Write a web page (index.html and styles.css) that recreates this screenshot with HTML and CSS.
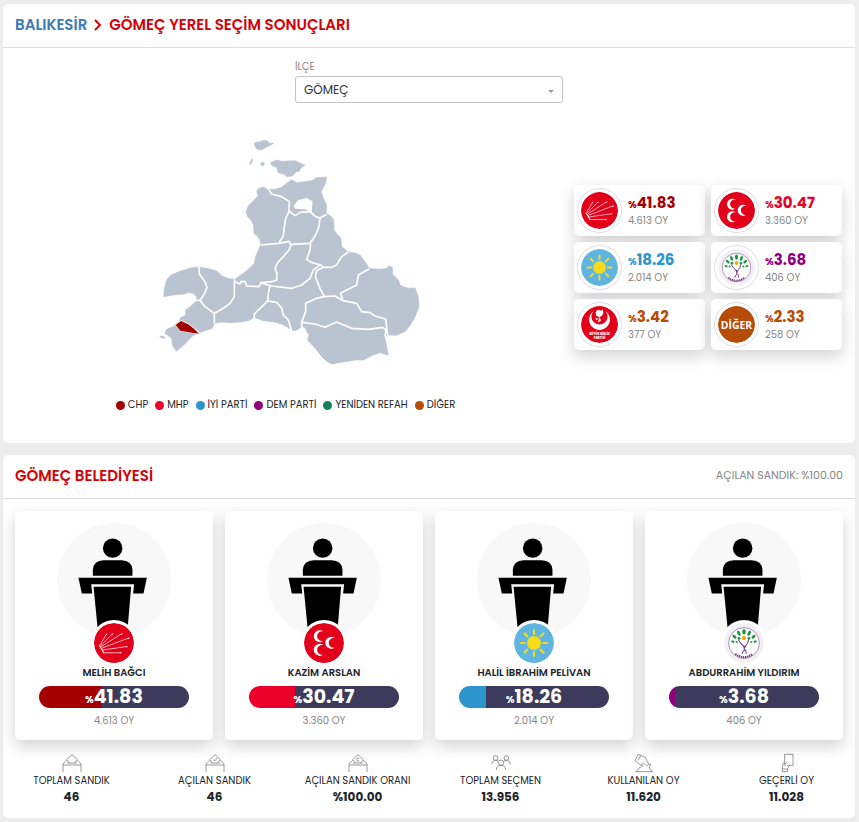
FILE: index.html
```html
<!DOCTYPE html>
<html lang="tr">
<head>
   <meta charset="UTF-8">
   <meta name="viewport" content="width=device-width, initial-scale=1.0">
   <title>Gömeç Yerel Seçim Sonuçları</title>
   <link rel="stylesheet" href="styles.css">
</head>
<body>
   <!-- Shared logos and figures -->
   <svg class="sprite" aria-hidden="true">
      <symbol id="logo-chp" viewBox="0 0 114 114">
         <circle cx="57" cy="57" r="57" fill="#e2001a"/>
         <g stroke="#fff" stroke-width="2" fill="#fff">
            <path d="M17 63L35 33M18 66L52 31M20 68L78 31M22 72L98 43M24 77L94 67M28 85H76"/>
            <path d="M33 34l3-5 1 5zM50 33l6-4-3 5zM76 32l6-3-3 5zM95 43l8-1-6 4zM91 67l7-1-6 4zM74 83l6 2-6 2z" stroke="none"/>
            <path d="M15 64l13 22-4-9-6-9z"/>
         </g>
      </symbol>
      <symbol id="logo-mhp" viewBox="0 0 114 114">
         <circle cx="57" cy="57" r="57" fill="#e2001a"/>
         <g fill="#fff">
            <path d="M55 24A17 17 0 1 0 55 51A14 14 0 1 1 55 24z"/>
            <path d="M55 63A17 17 0 1 0 55 90A14 14 0 1 1 55 63z"/>
            <path d="M88 43A17 17 0 1 0 88 70A14 14 0 1 1 88 43z"/>
         </g>
      </symbol>
      <symbol id="logo-iyi" viewBox="0 0 114 114">
         <circle cx="57" cy="57" r="57" fill="#5fb5e0"/>
         <circle cx="57" cy="57" r="20" fill="#f4dc1c"/>
         <path d="M57 31V20M57 83v11M31 57H20M83 57h11M38 38l-8-8M76 38l8-8M38 76l-8 8M76 76l8 8" stroke="#f4dc1c" stroke-width="6" stroke-linecap="round"/>
      </symbol>
      <symbol id="logo-dem" viewBox="0 0 114 114">
         <circle cx="57" cy="57" r="57" fill="#f1f1f1"/>
         <circle cx="57" cy="57" r="44" fill="#fff" stroke="#9560a5" stroke-width="2"/>
         <g fill="#16963e">
            <ellipse cx="57" cy="25" rx="5" ry="8"/>
            <ellipse cx="42" cy="29" rx="4" ry="8" transform="rotate(-25 42 29)"/>
            <ellipse cx="72" cy="29" rx="4" ry="8" transform="rotate(25 72 29)"/>
            <ellipse cx="30" cy="39" rx="4" ry="7" transform="rotate(-48 30 39)"/>
            <ellipse cx="84" cy="39" rx="4" ry="7" transform="rotate(48 84 39)"/>
            <ellipse cx="25" cy="53" rx="3" ry="5" transform="rotate(-70 25 53)"/>
            <ellipse cx="89" cy="53" rx="3" ry="5" transform="rotate(70 89 53)"/>
            <circle cx="43" cy="44" r="4"/>
            <circle cx="71" cy="44" r="4"/>
            <circle cx="36" cy="54" r="3"/>
            <circle cx="78" cy="54" r="3"/>
         </g>
         <circle cx="57" cy="43" r="6" fill="#f7a600"/>
         <path d="M41 48q7 13 14 17l3 7 5-9q6-5 7-16M57 64l1 14q-7 4-6 10M60 76q5 5 3 12" fill="none" stroke="#74378a" stroke-width="3"/>
         <path d="M32 88q25 19 50 0" fill="none" stroke="#74378a" stroke-width="6" stroke-dasharray="4 2"/>
      </symbol>
      <symbol id="speaker" viewBox="170 68 340 340">
         <circle cx="340" cy="238" r="170" fill="#f8f8f8"/>
         <circle cx="336" cy="143" r="29"/>
         <path d="M277 225V207q2-27 32-28h54q30 1 32 28v18z"/>
         <path d="M234 231H438L428 278H397L400 251H272L275 278H244z"/>
         <path d="M279 258H391L380 390H292z"/>
      </symbol>
      <symbol id="ballot-box" viewBox="0 0 60 56">
         <path d="M3 55V34H57V55M3 34V30L14 20M57 34V30L46 20M16 28H44M22 28L14 18 30 3 46 18 38 28"/>
      </symbol>
   </svg>

   <section class="panel">
      <header class="panel-header">
         <h1 class="title">
            <a href="#">BALIKESİR</a>
            <svg class="chevron" viewBox="0 0 8 12" aria-hidden="true"><path d="M1 1l5 5-5 5"/></svg>
            <span>GÖMEÇ YEREL SEÇİM SONUÇLARI</span>
         </h1>
      </header>

      <div class="district">
         <label for="district">İLÇE</label>
         <div class="select-wrap">
            <select id="district">
               <option>GÖMEÇ</option>
            </select>
         </div>
      </div>

      <div class="results">
         <div class="map-column">
            <svg class="map" viewBox="-27 0 840 720" role="img" aria-label="Balıkesir ilçe haritası">
               <g class="land">
                  <path d="M26 500L28 475 36 448 48 435 75 424 110 413 132 411 165 417 185 423 200 437 222 446 240 448 262 432 280 418 298 400 302 380 312 355 318 345 314 328 304 316 297 310 296 285 288 270 278 260 273 245 280 228 295 212 310 197 305 184 312 175 326 171 337 178 360 178 380 172 395 160 410 149 425 158 470 152 485 143 515 141 512 160 498 185 505 205 515 225 514 250 528 259 536 270 537 300 548 315 558 325 560 350 580 366 600 369 615 375 630 395 643 415 670 418 693 416 702 408 712 412 713 433 730 450 736 466 760 475 780 474 790 500 792 530 780 560 768 582 752 603 725 616 702 615 688 620 693 640 700 675 675 668 655 675 625 690 600 690 570 695 530 702 515 694 500 680 485 660 458 630 462 615 450 594 442 588 430 598 415 602 395 590 380 582 355 575 325 572 298 562 280 572 255 576 225 578 200 576 178 580 172 595 150 602 132 608 112 618 92 640 78 652 64 664 52 645 50 625 30 610 35 598 55 590 62 583 75 573 76 563 92 555 92 540 105 530 125 512 125 500 115 490 100 487 90 492 60 494z"/>
                  <path d="M297 42L302 37 318 35 324 31 338 33 341 39 356 40 340 49 318 60 305 57z"/>
                  <path d="M347 98L365 90 380 94 420 92 450 106 437 114 433 124 424 125 412 138 395 140 388 133 370 128 365 112 350 106z"/>
                  <path d="M284 101l5-12 4-2-2 10-4 6zM317 100l9-3 2 6-6 6zM14 618l14 2 2 5-10-1z"/>
               </g>
               <g class="borders">
                  <path d="M132 411L133 432 150 455 156 472 148 492 136 510 124 512"/>
                  <path d="M136 512L150 530 178 550V580M178 550L205 535 225 520 238 500V448"/>
                  <path d="M240 455L255 462 258 455H270L275 468 312 470 318 458 350 455 365 450 366 430 360 415 368 398 385 380 402 360 408 345 402 334 372 340 318 345"/>
                  <path d="M372 338L385 318 388 290 392 265 402 245 403 215 380 200 350 192 340 178"/>
                  <path d="M402 243L420 257 435 247 465 245 482 260 495 264 515 253"/>
                  <path d="M495 264L492 290 482 315 465 340 408 343"/>
                  <path d="M467 340L465 360 455 388 470 398 498 405 505 412 530 412 545 405 560 380 580 366"/>
                  <path d="M498 403L475 420 465 445 440 465 410 475 350 468 315 458"/>
                  <path d="M505 412L485 422 481 440 495 475 508 500"/>
                  <path d="M345 468L340 490 338 513 310 540 298 552V564M338 513L365 517 380 535 385 555 400 570 410 602"/>
                  <path d="M643 416L610 435 605 465 575 480 557 490 563 510"/>
                  <path d="M440 590V577L452 545V520L485 505 507 500 540 498 565 512 605 520 620 545 645 548 660 558 692 567 698 617"/>
                  <path d="M440 577L480 582 510 592 545 576 590 595 640 598 683 592 693 600 690 620"/>
                  <path d="M78 573L100 583 132 608"/>
               </g>
               <path class="lake" d="M415 228L430 210 455 204 473 214 470 246 450 238 420 236z"/>
               <path class="selected" d="M62 585L78 573 100 583 118 597 132 611 100 607 76 602z"/>
            </svg>
            <ul class="legend">
               <li><span class="dot chp"></span>CHP</li>
               <li><span class="dot mhp"></span>MHP</li>
               <li><span class="dot iyi"></span>İYİ PARTİ</li>
               <li><span class="dot dem"></span>DEM PARTİ</li>
               <li><span class="dot yrp"></span>YENİDEN REFAH</li>
               <li><span class="dot other"></span>DİĞER</li>
            </ul>
         </div>

         <div class="party-grid">
            <div class="party-card">
               <svg class="party-logo"><use href="#logo-chp"/></svg>
               <div class="party-text">
                  <p class="rate text-chp"><small>%</small>41.83</p>
                  <p class="votes">4.613 OY</p>
               </div>
            </div>
            <div class="party-card">
               <svg class="party-logo"><use href="#logo-mhp"/></svg>
               <div class="party-text">
                  <p class="rate text-mhp"><small>%</small>30.47</p>
                  <p class="votes">3.360 OY</p>
               </div>
            </div>
            <div class="party-card">
               <svg class="party-logo"><use href="#logo-iyi"/></svg>
               <div class="party-text">
                  <p class="rate text-iyi"><small>%</small>18.26</p>
                  <p class="votes">2.014 OY</p>
               </div>
            </div>
            <div class="party-card">
               <svg class="party-logo"><use href="#logo-dem"/></svg>
               <div class="party-text">
                  <p class="rate text-dem"><small>%</small>3.68</p>
                  <p class="votes">406 OY</p>
               </div>
            </div>
            <div class="party-card">
               <svg class="party-logo" viewBox="0 0 114 114">
                  <circle cx="57" cy="57" r="57" fill="#e2001a"/>
                  <path d="M38 16A32 32 0 1 0 76 16A25 25 0 1 1 38 16z" fill="#fff"/>
                  <path d="M56 12l5 3 6-4 2 11-5 9-8 4-9-5-2-10 4-7zM57 34l-5 17 10-6M55 40l-10-4 1 7z" fill="#fff"/>
                  <text class="logo-caption" x="57" y="89" text-anchor="middle">BÜYÜK BİRLİK</text>
                  <text class="logo-caption" x="57" y="102" text-anchor="middle">PARTİSİ</text>
               </svg>
               <div class="party-text">
                  <p class="rate text-other"><small>%</small>3.42</p>
                  <p class="votes">377 OY</p>
               </div>
            </div>
            <div class="party-card">
               <svg class="party-logo" viewBox="0 0 114 114">
                  <circle cx="57" cy="57" r="57" fill="#b74b08"/>
                  <text class="logo-other-text" x="57" y="71" text-anchor="middle">DİĞER</text>
               </svg>
               <div class="party-text">
                  <p class="rate text-other"><small>%</small>2.33</p>
                  <p class="votes">258 OY</p>
               </div>
            </div>
         </div>
      </div>
   </section>

   <section class="panel">
      <header class="panel-header">
         <h2 class="title">GÖMEÇ BELEDİYESİ</h2>
         <span class="opened">AÇILAN SANDIK: %100.00</span>
      </header>

      <div class="candidates">
         <article class="candidate">
            <svg class="photo"><use href="#speaker"/></svg>
            <svg class="badge"><use href="#logo-chp"/></svg>
            <h3>MELİH BAĞCI</h3>
            <div class="bar chp" style="--rate: 41.83%"><small>%</small>41.83</div>
            <p class="votes">4.613 OY</p>
         </article>
         <article class="candidate">
            <svg class="photo"><use href="#speaker"/></svg>
            <svg class="badge"><use href="#logo-mhp"/></svg>
            <h3>KAZİM ARSLAN</h3>
            <div class="bar mhp" style="--rate: 30.47%"><small>%</small>30.47</div>
            <p class="votes">3.360 OY</p>
         </article>
         <article class="candidate">
            <svg class="photo"><use href="#speaker"/></svg>
            <svg class="badge"><use href="#logo-iyi"/></svg>
            <h3>HALİL İBRAHİM PELİVAN</h3>
            <div class="bar iyi" style="--rate: 18.26%"><small>%</small>18.26</div>
            <p class="votes">2.014 OY</p>
         </article>
         <article class="candidate">
            <svg class="photo"><use href="#speaker"/></svg>
            <svg class="badge"><use href="#logo-dem"/></svg>
            <h3>ABDURRAHİM YILDIRIM</h3>
            <div class="bar dem" style="--rate: 3.68%"><small>%</small>3.68</div>
            <p class="votes">406 OY</p>
         </article>
      </div>

      <div class="stats">
         <div class="stat">
            <svg class="stat-icon" viewBox="0 0 60 56"><use href="#ballot-box"/></svg>
            <p>TOPLAM SANDIK</p>
            <strong>46</strong>
         </div>
         <div class="stat">
            <svg class="stat-icon" viewBox="0 0 60 56"><use href="#ballot-box"/><path d="M25 17l4 5 7-9"/></svg>
            <p>AÇILAN SANDIK</p>
            <strong>46</strong>
         </div>
         <div class="stat">
            <svg class="stat-icon" viewBox="0 0 60 56"><use href="#ballot-box"/><path d="M34 14q-8-3-8 4t8 4"/></svg>
            <p>AÇILAN SANDIK ORANI</p>
            <strong>%100.00</strong>
         </div>
         <div class="stat">
            <svg class="stat-icon" viewBox="0 0 60 56">
               <circle cx="14" cy="13" r="7"/>
               <circle cx="46" cy="13" r="7"/>
               <circle cx="30" cy="27" r="8"/>
               <path d="M2 32q0-12 12-12 5 0 8 4M58 32q0-12-12-12-5 0-8 4M16 49q0-14 14-14t14 14"/>
            </svg>
            <p>TOPLAM SEÇMEN</p>
            <strong>13.956</strong>
         </div>
         <div class="stat">
            <svg class="stat-icon" viewBox="0 0 60 56">
               <path d="M3 21L12 2 34 11 44 31 38 37 28 28 22 33 27 38 22 36 3 21M12 21L20 6M44 32H50L46 43 54 53M22 40L16 42 8 53M3 54H57"/>
            </svg>
            <p>KULLANILAN OY</p>
            <strong>11.620</strong>
         </div>
         <div class="stat">
            <svg class="stat-icon" viewBox="0 0 60 56">
               <path d="M23 24V2H48V35H30M23 24Q17 29 16 42V54H32V45L37 36M23 24V33M31 24Q24 29 23 37M16 46H32"/>
            </svg>
            <p>GEÇERLİ OY</p>
            <strong>11.028</strong>
         </div>
      </div>
   </section>
</body>
</html>
```
FILE: styles.css
```css
* {
   box-sizing: border-box;
}
body {
   font-family: 'Poppins', 'Inter', sans-serif;
   background-color: #ededed;
   color: #212529;
   margin: 0;
   padding: 4px 4px 4px 3px;
}
h1, h2, h3, p, ul {
   margin: 0;
   padding: 0;
}
.sprite {
   position: absolute;
   width: 0;
   height: 0;
}
.panel {
   background-color: #fff;
   border-radius: 5px;
   overflow: hidden;
   margin-bottom: 12px;
}
.panel:last-child {
   margin-bottom: 0;
}
.panel-header {
   display: flex;
   justify-content: space-between;
   align-items: center;
   height: 44px;
   padding: 0 12px 2px;
   border-bottom: 1px solid #ddd;
}
.title {
   display: flex;
   align-items: center;
   font-size: 15px;
   font-weight: 600;
   line-height: 20px;
   color: #d30209;
}
.title a {
   color: #3d7ab8;
   text-decoration: none;
}
.chevron {
   width: 8px;
   height: 12px;
   margin: 0 7px;
   fill: none;
   stroke: #d30209;
   stroke-width: 2;
}
.opened {
   font-size: 11px;
   color: #868686;
}

/* District select */
.district {
   width: 268px;
   margin: 12px auto 0;
}
.district label {
   display: block;
   font-size: 10px;
   line-height: 14px;
   color: #868686;
   margin-bottom: 2px;
}
.select-wrap {
   position: relative;
}
.select-wrap::after {
   content: '';
   position: absolute;
   right: 9px;
   top: 14px;
   border: 3px solid transparent;
   border-top-color: #999;
   border-bottom: 0;
}
.district select {
   display: block;
   appearance: none;
   width: 100%;
   height: 27px;
   padding: 0 8px;
   border: 1px solid #c4c4c4;
   border-radius: 3px;
   background-color: #fff;
   font-family: inherit;
   font-size: 12px;
   color: #333;
}

/* Map and party results */
.results {
   display: grid;
   grid-template-columns: 1fr 268px;
   gap: 18px;
   align-items: center;
   padding: 27px 13px 31px 12px;
}
.map-column {
   display: flex;
   flex-direction: column;
   align-items: center;
   gap: 28px;
}
.map {
   width: 100%;
   max-width: 280px;
}
.land {
   fill: #bac4d0;
   stroke: #bac4d0;
   stroke-width: 2;
   stroke-linejoin: round;
}
.borders {
   fill: none;
   stroke: #fff;
   stroke-width: 5;
   stroke-linejoin: round;
}
.lake {
   fill: #fff;
}
.selected {
   fill: #a40000;
   stroke: #fff;
   stroke-width: 3;
   paint-order: stroke;
}
.legend {
   display: flex;
   flex-wrap: wrap;
   justify-content: center;
   gap: 7px;
   list-style: none;
   font-size: 10px;
   line-height: 14px;
}
.legend li {
   display: flex;
   align-items: center;
   gap: 3px;
}
.dot {
   width: 9px;
   height: 9px;
   border-radius: 50%;
}
.chp { background-color: #a40000; }
.mhp { background-color: #ea0029; }
.iyi { background-color: #2c95cb; }
.dem { background-color: #91007f; }
.yrp { background-color: #15805c; }
.other { background-color: #b74b08; }
.text-chp { color: #a40000; }
.text-mhp { color: #ea0029; }
.text-iyi { color: #2c95cb; }
.text-dem { color: #91007f; }
.text-other { color: #b74b08; }

.party-grid {
   display: grid;
   grid-template-columns: 1fr 1fr;
   gap: 6px;
   padding-bottom: 8px;
}
.party-card {
   display: flex;
   align-items: center;
   gap: 6px;
   height: 51px;
   padding: 0 3px;
   border-radius: 5px;
   background-color: #fff;
   box-shadow: 0 6px 16px rgba(0, 0, 0, 0.18);
}
.party-logo {
   flex: none;
   width: 45px;
   height: 45px;
   padding: 3px;
   border: 1px solid #dcdee3;
   border-radius: 50%;
}
.party-text {
   padding-top: 4px;
}
.rate {
   font-size: 15px;
   font-weight: 700;
   line-height: 18px;
}
.rate small, .bar small {
   font-size: 10px;
   line-height: 1;
}
.votes {
   font-size: 10px;
   line-height: 18px;
   color: #868686;
}
.logo-caption {
   font-family: 'Open Sans', sans-serif;
   font-size: 9px;
   font-weight: 800;
   fill: #fff;
}
.logo-other-text {
   font-family: 'Liberation Sans Narrow', 'Open Sans', sans-serif;
   font-size: 32px;
   font-weight: 700;
   fill: #fff;
}

/* Candidates */
.candidates {
   display: grid;
   grid-template-columns: repeat(4, 1fr);
   gap: 12px;
   padding: 12px 12px 0;
}
.candidate {
   display: flex;
   flex-direction: column;
   align-items: center;
   padding: 12px 0 10px;
   border-radius: 5px;
   background-color: #fff;
   box-shadow: 0 6px 16px rgba(0, 0, 0, 0.18);
}
.photo {
   width: 114px;
   height: 114px;
}
.badge {
   width: 46px;
   height: 46px;
   margin-top: -17px;
   padding: 3px;
   border-radius: 50%;
   background-color: #fff;
}
.candidate h3 {
   font-size: 10px;
   font-weight: 600;
   line-height: 14px;
   margin-bottom: 6px;
}
/* party colour shows through up to --rate */
.bar {
   width: 150px;
   height: 22px;
   margin-bottom: 4px;
   border-radius: 11px;
   background-image: linear-gradient(to right, transparent var(--rate), #3c3b5b 0);
   font-size: 19px;
   font-weight: 700;
   line-height: 22px;
   text-align: center;
   color: #fff;
}

/* Ballot totals */
.stats {
   display: grid;
   grid-template-columns: repeat(6, 1fr);
   margin: 0 -3px;
   padding: 13px 0 13px;
   text-align: center;
}
.stat {
   display: flex;
   flex-direction: column;
   align-items: center;
   font-size: 10px;
   line-height: 16px;
}
.stat-icon {
   width: 20px;
   height: 20px;
   fill: none;
   stroke: #666;
   stroke-width: 2;
}
.stat strong {
   font-size: 12px;
   font-weight: 700;
}
```
